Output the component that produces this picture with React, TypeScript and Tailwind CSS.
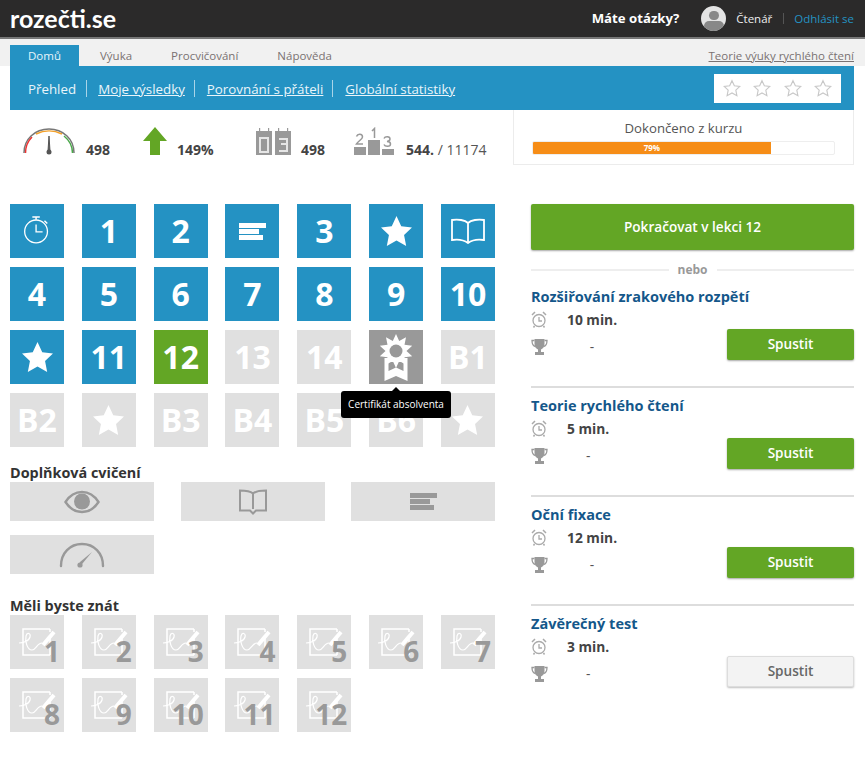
// App.tsx
import React from "react";

const Star = ({ className }: { className?: string }) => (
  <svg viewBox="0 0 32 31" className={className}>
    <path d="M16 0l4.9 10.5 11.1 1.4-8.2 7.8 2.2 11.3L16 25.4 6 31l2.2-11.3L0 11.9l11.1-1.4z" fill="currentColor" />
  </svg>
);

const StarOutline = () => (
  <svg viewBox="0 0 32 31" className="w-[18px] h-[18px] text-[#c8c8c8]">
    <path d="M16 2.5l4.2 9 9.6 1.2-7 6.7 1.9 9.7L16 24.3l-8.7 4.8 1.9-9.7-7-6.7 9.6-1.2z" fill="none" stroke="currentColor" strokeWidth="2" />
  </svg>
);

const Stopwatch = () => (
  <svg viewBox="0 0 30 30" className="w-[28px] h-[30px] -mt-[2px]" fill="none" stroke="white" strokeWidth="1.4">
    <circle cx="14" cy="16.5" r="12.2" />
    <path d="M14 9v8h7" />
    <path d="M10 1h8M14 1v3M23 5l3 3" strokeWidth="1.6" />
  </svg>
);

const Lines = ({ color }: { color: string }) => (
  <svg viewBox="0 0 27 17" className="w-[27px] h-[17px]" fill={color}>
    <rect x="0" y="0" width="27" height="5" />
    <rect x="0" y="6" width="20" height="5" />
    <rect x="0" y="12" width="24" height="5" />
  </svg>
);

const OpenBook = () => (
  <svg viewBox="0 0 36 26" className="w-[36px] h-[26px]" fill="none" stroke="white" strokeWidth="1.8">
    <path d="M18 5C15 2 8 1 2 2v20c6-1 12 0 16 3 4-3 10-4 16-3V2c-6-1-13 0-16 3zM18 5v20" />
  </svg>
);

// 10 pointed seal of the certificate tile
const sealPoints = Array.from({ length: 20 }, (_, i) => {
  const r = i % 2 === 0 ? 17 : 10.5;
  const a = (Math.PI * i) / 10 - Math.PI / 2;
  return `${(17 + r * Math.cos(a)).toFixed(1)},${(17 + r * Math.sin(a)).toFixed(1)}`;
}).join(" ");

const Medal = () => (
  <svg viewBox="0 0 34 47" className="w-[34px] h-[47px]">
    <path d="M5.500 24v23l11.500-5 11.500 5V24z" fill="white" />
    <path d="M9.500 28v9l7.500-3.500 7.500 3.500v-9z" fill="#999" />
    <polygon points={sealPoints} fill="white" />
    <circle cx="17" cy="17" r="6.500" fill="#999" />
  </svg>
);

const Eye = () => (
  <svg viewBox="0 0 36 24" className="w-[36px] h-[24px]">
    <path d="M1.500 12C6 5 11 2 18 2s12 3 16.500 10C30 19 25 22 18 22S6 19 1.500 12z" fill="none" stroke="#999" strokeWidth="2.400" />
    <circle cx="18" cy="11.500" r="8" fill="#999" />
  </svg>
);

const BookOutline = () => (
  <svg viewBox="0 0 28 26" className="w-[28px] h-[26px]" fill="none" stroke="#999" strokeWidth="2">
    <path d="M14 4.500C11 2 6 1.500 1 1.500v20h10l3 3 3-3h10v-20c-5 0-10 .5-13 3zM14 4.500V20" />
  </svg>
);

const Gauge = () => (
  <svg viewBox="0 0 46 26" className="w-[46px] h-[26px]" fill="none">
    <path d="M2 24C2 11 11 2 23 2s21 9 21 22" stroke="#999" strokeWidth="2.400" strokeLinecap="round" />
    <path d="M33 10L23.500 21.500 20 24l1-4z" fill="#999" />
    <circle cx="21" cy="23" r="2.600" fill="#999" />
  </svg>
);

const Scribble = () => (
  <svg viewBox="0 0 54 54" className="absolute inset-0 w-[54px] h-[54px]" fill="none" stroke="white" strokeWidth="1.500">
    <path d="M40 14H13v26h27M40 14v3M40 24v16" />
    <path d="M9 28c4 0 10-2 11-6 1-4-3-5-4-1-1 5 1 14 6 14 4 0 5-7 10-7" strokeWidth="1.200" />
    <path d="M33 30l11-13" strokeWidth="4" />
  </svg>
);

const Alarm = () => (
  <svg viewBox="0 0 16 17" className="w-[16px] h-[17px]" fill="none" stroke="#aaa" strokeWidth="1.300">
    <circle cx="8" cy="9.500" r="6" />
    <path d="M8 6v4h3" />
    <path d="M1 4l3-3M15 4l-3-3M3.500 15l-1 1.500M12.500 15l1 1.500" strokeWidth="1.500" />
  </svg>
);

const Trophy = () => (
  <svg viewBox="0 0 17 16" className="w-[17px] h-[16px]">
    <path d="M3.500 0h10v5c0 3-2 5-3.500 5.500V13H13v3H4v-3h3v-2.500C5.500 10 3.500 8 3.500 5z" fill="#999" />
    <path d="M3.500 1.500H1C1 5 2 7 4.500 7.500M13.500 1.500H16C16 5 15 7 12.500 7.500" fill="none" stroke="#999" strokeWidth="1.300" />
  </svg>
);

const Tile = ({ kind, children }: { kind: "blue" | "green" | "gray" | "dark"; children: React.ReactNode }) => {
  const bg = {
    blue: "bg-[#2492c3]",
    green: "bg-[#63a625]",
    gray: "bg-[#e0e0e0]",
    dark: "bg-[#999999]",
  }[kind];
  return (
    <div className={`${bg} w-[54px] h-[54px] flex items-center justify-center text-white text-[32px] font-bold`}>
      {children}
    </div>
  );
};

const star = <Star className="w-[31px] h-[30px]" />;

const lessons: { kind: "blue" | "green" | "gray" | "dark"; content: React.ReactNode }[] = [
  { kind: "blue", content: <Stopwatch /> },
  { kind: "blue", content: "1" },
  { kind: "blue", content: "2" },
  { kind: "blue", content: <Lines color="white" /> },
  { kind: "blue", content: "3" },
  { kind: "blue", content: star },
  { kind: "blue", content: <OpenBook /> },
  { kind: "blue", content: "4" },
  { kind: "blue", content: "5" },
  { kind: "blue", content: "6" },
  { kind: "blue", content: "7" },
  { kind: "blue", content: "8" },
  { kind: "blue", content: "9" },
  { kind: "blue", content: "10" },
  { kind: "blue", content: star },
  { kind: "blue", content: "11" },
  { kind: "green", content: "12" },
  { kind: "gray", content: "13" },
  { kind: "gray", content: "14" },
  { kind: "dark", content: <Medal /> },
  { kind: "gray", content: "B1" },
  { kind: "gray", content: "B2" },
  { kind: "gray", content: star },
  { kind: "gray", content: "B3" },
  { kind: "gray", content: "B4" },
  { kind: "gray", content: "B5" },
  { kind: "gray", content: "B6" },
  { kind: "gray", content: star },
];

const courses = [
  { title: "Rozšiřování zrakového rozpětí", time: "10 min.", active: true },
  { title: "Teorie rychlého čtení", time: "5 min.", active: true },
  { title: "Oční fixace", time: "12 min.", active: true },
  { title: "Závěrečný test", time: "3 min.", active: false },
];

const Stat = ({ icon, children, className }: { icon: React.ReactNode; children: React.ReactNode; className: string }) => (
  <div className={`flex items-end ${className}`}>
    {icon}
    <div className="text-[14px] leading-[19px] font-bold text-[#444]">{children}</div>
  </div>
);

const App: React.FC = () => {
  return (
    <div className="w-[865px] h-[768px] overflow-hidden bg-white font-['Open_Sans',sans-serif]">
      {/* top bar */}
      <div className="h-[39px] bg-[#2b2a2a] border-b-2 border-[#777] flex items-center pl-[10px] pr-[11px]">
        <div className="font-['Lato',sans-serif] text-white text-[25px] leading-[37px] font-bold">rozečti.se</div>
        <div className="ml-auto text-white text-[13.200px] font-bold">Máte otázky?</div>
        <div className="ml-[22px] w-[25px] h-[25px] rounded-full bg-[#e4e4e4] overflow-hidden flex flex-col items-center">
          <div className="mt-[5px] w-[10px] h-[10px] rounded-full bg-[#888]" />
          <div className="mt-[1px] w-[20px] h-[12px] rounded-full bg-[#888]" />
        </div>
        <div className="ml-[10px] text-[#eee] text-[11.500px]">Čtenář</div>
        <div className="ml-[11px] w-px h-[11px] bg-[#555]" />
        <div className="ml-[10px] text-[#2492c3] text-[11.500px]">Odhlásit se</div>
      </div>

      {/* tabs */}
      <div className="h-[27px] bg-[#f1f1f1] flex items-end pl-[10px] pr-[11px] text-[11.500px] text-[#7a7272]">
        <div className="w-[69px] h-[21px] bg-[#2492c3] text-[#e8f4fa] flex items-center justify-center">Domů</div>
        <div className="h-[21px] ml-[21px] flex items-center">Výuka</div>
        <div className="h-[21px] ml-[39px] flex items-center">Procvičování</div>
        <div className="h-[21px] ml-[39px] flex items-center">Nápověda</div>
        <div className="h-[21px] ml-auto flex items-center underline">Teorie výuky rychlého čtení</div>
      </div>

      {/* blue menu */}
      <div className="mr-[11px] ml-[10px] h-[44px] bg-[#2492c3] flex items-center pl-[18px] pr-[13px] text-[13.330px] leading-[20px] text-[#eaf5fa]">
        <span className="mt-[1px]">Přehled</span>
        <span className="ml-[10px] w-px h-[17px] bg-[#a9d4e8]" />
        <span className="ml-[11px] mt-[1px] underline">Moje výsledky</span>
        <span className="ml-[9px] w-px h-[17px] bg-[#a9d4e8]" />
        <span className="ml-[12px] mt-[1px] underline">Porovnání s přáteli</span>
        <span className="ml-[9px] w-px h-[17px] bg-[#a9d4e8]" />
        <span className="ml-[12px] mt-[1px] underline">Globální statistiky</span>
        <div className="ml-auto w-[127px] h-[29px] bg-white flex items-center justify-between px-[9px]">
          <StarOutline />
          <StarOutline />
          <StarOutline />
          <StarOutline />
        </div>
      </div>

      {/* stats */}
      <div className="h-[55px] mr-[11px] ml-[10px] flex">
        <div className="flex-1">
          <div className="flex h-[49px] items-end pl-[12px]">
            <Stat
              className="w-[121px]"
              icon={
                <svg viewBox="0 0 54 28" className="w-[54px] h-[28px] mb-[4px] mr-[10px]" fill="none">
                  <path d="M2 26C2 12 13 2 27 2s25 10 25 24" stroke="#777" strokeWidth="1.500" />
                  <path d="M3.500 26C3.500 19 6 14 10 10" stroke="#e33" strokeWidth="1.500" />
                  <path d="M14 7c8-4 18-4 26 0" stroke="#f3a12b" strokeWidth="1.500" />
                  <path d="M42 9c5 4 8.500 10 8.500 17" stroke="#4aa84a" strokeWidth="1.500" />
                  <path d="M26 24l1-15 1 15z" fill="#555" stroke="#555" />
                  <circle cx="27" cy="25" r="2.500" fill="#555" />
                </svg>
              }
            >
              498
            </Stat>
            <Stat
              className="w-[113px]"
              icon={
                <svg viewBox="0 0 24 28" className="w-[24px] h-[28px] mb-[4px] mr-[10px]">
                  <path d="M12 0l12 14h-7v14H7V14H0z" fill="#63a625" />
                </svg>
              }
            >
              149%
            </Stat>
            <Stat
              className="w-[98px]"
              icon={
                <svg viewBox="0 0 35 27" className="w-[35px] h-[27px] mb-[4px] mr-[10px]">
                  <rect x="0" y="3" width="16" height="24" fill="#999" />
                  <rect x="19" y="3" width="16" height="24" fill="#999" />
                  <rect x="3" y="0" width="1.200" height="6" fill="#999" />
                  <rect x="12" y="0" width="1.200" height="6" fill="#999" />
                  <rect x="22" y="0" width="1.200" height="6" fill="#999" />
                  <rect x="31" y="0" width="1.200" height="6" fill="#999" />
                  <rect x="4" y="10" width="8" height="14" fill="none" stroke="#e6e6e6" strokeWidth="2" />
                  <path d="M23 11h8v5h-6m6 0v7h-8" fill="none" stroke="#e6e6e6" strokeWidth="2" />
                </svg>
              }
            >
              498
            </Stat>
            <Stat
              className="w-[150px]"
              icon={
                <svg viewBox="0 0 40 28" className="w-[40px] h-[28px] mb-[4px] mr-[12px]">
                  <rect x="0" y="20" width="12" height="8" fill="#999" />
                  <rect x="14" y="13" width="12" height="15" fill="#999" />
                  <rect x="28" y="22" width="12" height="6" fill="#999" />
                  <path d="M2.500 9.500c1-3 6-3 6 .5 0 2-4 4-6 7h6.500M18 4l2.500-2.500V11M30 11.500c1-2.500 6-2.500 6 .5 0 2-3 2.500-3 2.500s3.500 0 3.500 2.500c0 3-5.500 3-6.500.5" fill="none" stroke="#999" strokeWidth="1.500" />
                </svg>
              }
            >
              544. <span className="font-normal text-[#555]">/ 11174</span>
            </Stat>
          </div>
        </div>
        <div className="w-[341px] border border-t-0 border-[#ececec] flex flex-col items-center pt-[9px]">
          <div className="text-[13.200px] leading-[18px] text-[#555]">Dokončeno z kurzu</div>
          <div className="mt-[4px] w-[303px] h-[14px] border border-[#eee] rounded-[2px] overflow-hidden">
            <div className="w-[79%] h-full bg-[#f68d17] text-white text-[8px] font-bold leading-[12px] text-center">79%</div>
          </div>
        </div>
      </div>

      {/* main */}
      <div className="mt-[39px] pl-[10px] pr-[11px] flex justify-between">
        <div className="w-[485px]">
          <div className="relative grid grid-cols-[repeat(7,54px)] justify-between gap-y-[9px]">
            {lessons.map((l, i) => (
              <Tile key={i} kind={l.kind}>{l.content}</Tile>
            ))}
            <div className="absolute left-[331px] top-[187px] w-[110px] h-[27px] bg-black rounded-[3px] text-white text-[10px] flex items-center justify-center">
              <span className="absolute -top-[4px] left-[51px] w-0 h-0 border-x-[4px] border-x-transparent border-b-[4px] border-b-black" />
              Certifikát absolventa
            </div>
          </div>

          <div className="mt-[16px] text-[14.400px] leading-[19px] font-bold text-[#333]">Doplňková cvičení</div>
          <div className="grid grid-cols-[repeat(3,144px)] justify-between gap-y-[14px]">
            <div className="h-[39px] bg-[#e0e0e0] flex items-center justify-center"><Eye /></div>
            <div className="h-[39px] bg-[#e0e0e0] flex items-center justify-center"><BookOutline /></div>
            <div className="h-[39px] bg-[#e0e0e0] flex items-center justify-center"><Lines color="#999" /></div>
            <div className="h-[39px] bg-[#e0e0e0] flex items-center justify-center"><Gauge /></div>
          </div>

          <div className="mt-[22px] text-[14.400px] leading-[19px] font-bold text-[#333]">Měli byste znát</div>
          <div className="grid grid-cols-[repeat(7,54px)] justify-between gap-y-[9px]">
            {["1", "2", "3", "4", "5", "6", "7", "8", "9", "10", "11", "12"].map((n) => (
              <div key={n} className="relative w-[54px] h-[54px] bg-[#e0e0e0]">
                <Scribble />
                <span className="absolute right-[4px] bottom-[-1px] text-[#999] text-[28px] leading-[38px] font-bold">{n}</span>
              </div>
            ))}
          </div>
        </div>

        <div className="w-[323px]">
          <div className="h-[46px] rounded-[2px] bg-[#63a625] shadow-[0_1px_2px_rgba(0,0,0,0.35)] flex items-center justify-center text-white text-[13.600px] font-semibold">
            Pokračovat v lekci 12
          </div>
          <div className="mt-[12px] h-[15px] flex items-center text-[12px] font-bold text-[#999]">
            <div className="flex-1 h-[2px] bg-[#eee]" />
            <span className="px-[9px]">nebo</span>
            <div className="flex-1 h-[2px] bg-[#eee]" />
          </div>
          <div className="mt-[2px]">
            {courses.map((c, i) => (
              <div key={c.title} className={`pt-[8px] h-[109px] ${i < 3 ? "border-b-2 border-[#ddd]" : ""}`}>
                <div className="text-[14.500px] leading-[19px] font-bold text-[#14578a]">{c.title}</div>
                <div className="mt-[5px] flex items-start">
                  <div className="w-[36px] flex flex-col">
                    <Alarm />
                    <div className="mt-[11px]"><Trophy /></div>
                  </div>
                  <div className="flex flex-col items-center text-[13.800px] leading-[17px] text-[#444]">
                    <span className="font-bold">{c.time}</span>
                    <span className="mt-[10px] text-[#555]">-</span>
                  </div>
                  <div
                    className={`ml-auto mt-[18px] w-[127px] h-[31px] rounded-[2px] flex items-center justify-center text-[13.600px] font-semibold ${
                      c.active
                        ? "bg-[#63a625] text-white shadow-[0_1px_2px_rgba(0,0,0,0.35)]"
                        : "bg-[#f3f3f3] text-[#666] border border-[#ddd] shadow-[0_1px_2px_rgba(0,0,0,0.25)]"
                    }`}
                  >
                    Spustit
                  </div>
                </div>
              </div>
            ))}
          </div>
        </div>
      </div>
    </div>
  );
};

export default App;
